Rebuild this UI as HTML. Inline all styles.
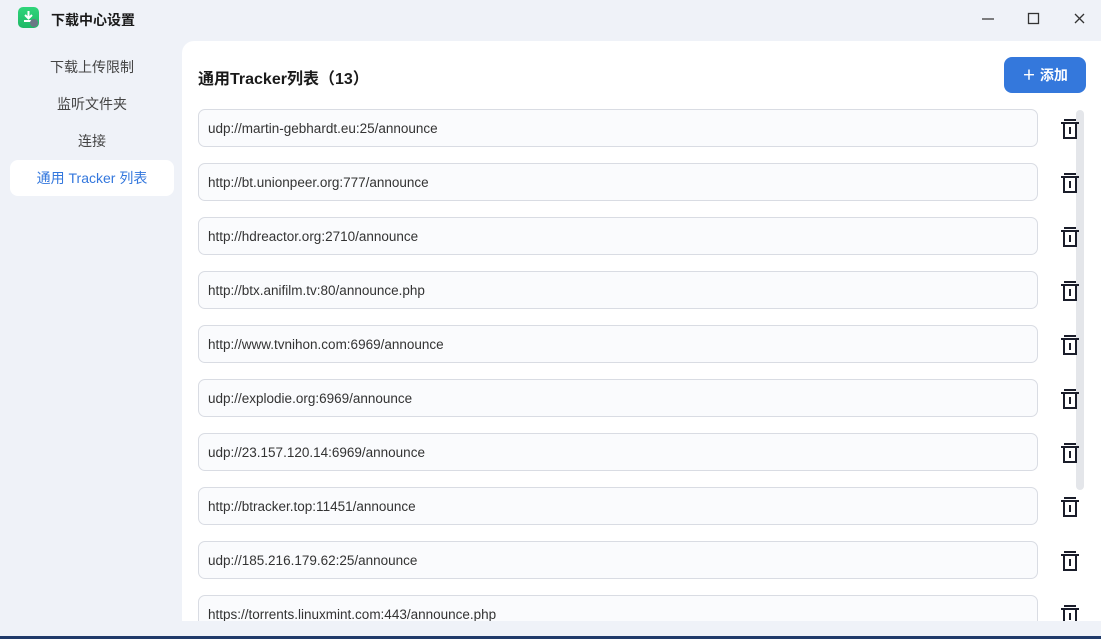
<!DOCTYPE html>
<html><head><meta charset="utf-8"><style>
*{margin:0;padding:0;box-sizing:border-box}
body{width:1101px;height:639px;overflow:hidden;background:#eff2f8;font-family:"Liberation Sans","Noto Sans CJK SC",sans-serif;position:relative;color:#222}
.title{position:absolute;left:51px;top:10px;font-size:14px;font-weight:bold;color:#1a1a1a}
.logo{position:absolute;left:18px;top:7px;width:21px;height:21px;border-radius:5px;background:linear-gradient(#2fd57a,#1fb866)}
.nav{position:absolute;left:10px;width:164px;height:36px;line-height:36px;text-align:center;font-size:14px;color:#444}
.nav.act{background:#fff;border-radius:8px;color:#3377dd}
.main{position:absolute;left:182px;top:41px;width:919px;height:580px;background:#fff;border-radius:12px 0 0 0;overflow:hidden}
.h{position:absolute;left:16px;top:24px;font-size:16px;font-weight:bold;color:#1a1a1a}
.add{position:absolute;left:822px;top:16px;width:82px;height:36px;background:#3478dc;border-radius:8px;color:#fff;font-size:14px;line-height:36px;text-align:center;font-weight:bold}
.row{position:absolute;left:16px;width:840px;height:38px;border:1px solid #d9dce3;border-radius:7px;background:#fafbfd;font-size:13.5px;line-height:38px;padding-left:9px;color:#333}
.tr{position:absolute;left:878px}
.sb{position:absolute;left:894px;top:69px;width:8px;height:380px;background:#e4e6ea;border-radius:4px}
.bot{position:absolute;left:0;top:636px;width:1101px;height:3px;background:#1f3a6a}
</style></head><body>
<div class="logo"><svg width="21" height="21"><path d="M10.5 4v7M7 8l3.5 3.5L14 8M6 14h8" stroke="#fff" stroke-width="2" fill="none"/><circle cx="16" cy="16" r="4" fill="#6b7785"/></svg></div>
<div class="title">下载中心设置</div>
<svg style="position:absolute;left:980px;top:10px" width="110" height="20"><path d="M2 9h12" stroke="#555" stroke-width="1.5"/><rect x="48.5" y="3.5" width="10" height="10" fill="none" stroke="#333" stroke-width="1.3"/><path d="M95 4l9 9M104 4l-9 9" stroke="#333" stroke-width="1.3"/></svg>
<div class="nav" style="top:49px">下载上传限制</div>
<div class="nav" style="top:86px">监听文件夹</div>
<div class="nav" style="top:123px">连接</div>
<div class="nav act" style="top:160px">通用 Tracker 列表</div>
<div class="main">
<div class="h">通用Tracker列表（13）</div>
<div class="add">＋ 添加</div>
<div class="sb"></div>
<div class="row" style="top:68px">udp://martin-gebhardt.eu:25/announce</div>
<div class="row" style="top:122px">http://bt.unionpeer.org:777/announce</div>
<div class="row" style="top:176px">http://hdreactor.org:2710/announce</div>
<div class="row" style="top:230px">http://btx.anifilm.tv:80/announce.php</div>
<div class="row" style="top:284px">http://www.tvnihon.com:6969/announce</div>
<div class="row" style="top:338px">udp://explodie.org:6969/announce</div>
<div class="row" style="top:392px">udp://23.157.120.14:6969/announce</div>
<div class="row" style="top:446px">http://btracker.top:11451/announce</div>
<div class="row" style="top:500px">udp://185.216.179.62:25/announce</div>
<div class="row" style="top:554px">https://torrents.linuxmint.com:443/announce.php</div>
<svg class="tr" style="top:0" width="20" height="580">
<defs><g id="t"><path d="M4 2h12M1 5h18M4 5v15h12V5M10 9v7" stroke="#1a1d2a" stroke-width="2" fill="none"/></g></defs>
<use href="#t" y="77"/><use href="#t" y="131"/><use href="#t" y="185"/><use href="#t" y="239"/><use href="#t" y="293"/><use href="#t" y="347"/><use href="#t" y="401"/><use href="#t" y="455"/><use href="#t" y="509"/><use href="#t" y="563"/>
</svg>
</div>
<div class="bot"></div>
</body></html>
